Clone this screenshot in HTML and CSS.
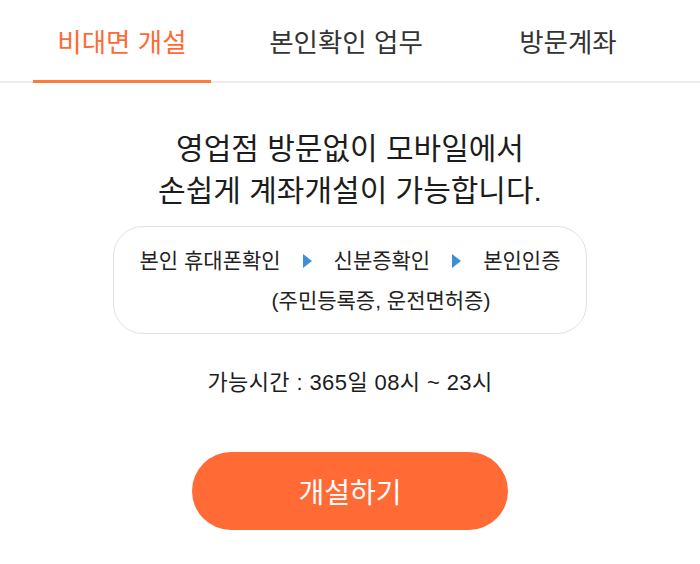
FILE: index.html
```html
<!DOCTYPE html>
<html lang="ko">
<head>
  <meta charset="UTF-8" />
  <meta name="viewport" content="width=device-width, initial-scale=1.0"/>
  <title>비대면 개설</title>
  <link rel="stylesheet" href="styles.css">
</head>
<body>
<nav class="tabs">
  <a class="tab active" href="#">비대면 개설</a>
  <a class="tab" href="#">본인확인 업무</a>
  <a class="tab" href="#">방문계좌</a>
</nav>

<main class="content">
  <h1 class="title">영업점 방문없이 모바일에서<br>손쉽게 계좌개설이 가능합니다.</h1>

  <div class="steps">
    <div class="steps-row">
      <span class="step">본인 휴대폰확인</span>
      <span class="arrow"></span>
      <span class="step">신분증확인</span>
      <span class="arrow"></span>
      <span class="step">본인인증</span>
    </div>
    <div class="steps-sub">(주민등록증, 운전면허증)</div>
  </div>

  <p class="hours">가능시간 : 365일 08시 ~ 23시</p>

  <button class="open-btn">개설하기</button>
</main>
</body>
</html>
```

FILE: styles.css
```css
body {
  margin: 0;
  font-family: "Liberation Sans", "Noto Sans CJK KR", sans-serif;
  background-color: #fff;
  color: #222;
}
.tabs {
  display: flex;
  gap: 48px;
  padding: 0 45px 0 33px;
  border-bottom: 2px solid #ececec;
}
.tab {
  flex: 1;
  display: flex;
  align-items: center;
  justify-content: center;
  font-size: 26.5px;
  color: #333;
  text-decoration: none;
  border-bottom: 3px solid transparent;
  margin-bottom: -2px;
  box-sizing: border-box;
  height: 83px;
}
.tab.active {
  flex: 0 0 178px;
  color: #ff6b35;
  border-bottom-color: #ff7a38;
}
.content {
  display: flex;
  flex-direction: column;
  align-items: center;
}
.title {
  margin: 45px 0 0;
  font-size: 30px;
  font-weight: normal;
  line-height: 42px;
  text-align: center;
  color: #1c1c1c;
}
.steps {
  margin-top: 14px;
  width: 474px;
  box-sizing: border-box;
  padding: 20px 0 18px;
  border: 1.5px solid #e2e2e6;
  border-radius: 30px;
  font-size: 21px;
  line-height: 28px;
}
.steps-row {
  display: flex;
  align-items: center;
  justify-content: center;
  gap: 22px;
}
.arrow {
  width: 0;
  height: 0;
  border-top: 7px solid transparent;
  border-bottom: 7px solid transparent;
  border-left: 9px solid #3a8fd6;
}
.steps-sub {
  margin-top: 12px;
  text-align: center;
  padding-left: 62px;
}
.hours {
  margin: 35px 0 0;
  font-size: 22px;
  letter-spacing: 0.4px;
  line-height: 28px;
  color: #1c1c1c;
}
.open-btn {
  margin-top: 55px;
  width: 316px;
  height: 78px;
  border: none;
  border-radius: 39px;
  background-color: #ff6a35;
  color: #fff;
  font-family: inherit;
  font-size: 28px;
  cursor: pointer;
}
```
